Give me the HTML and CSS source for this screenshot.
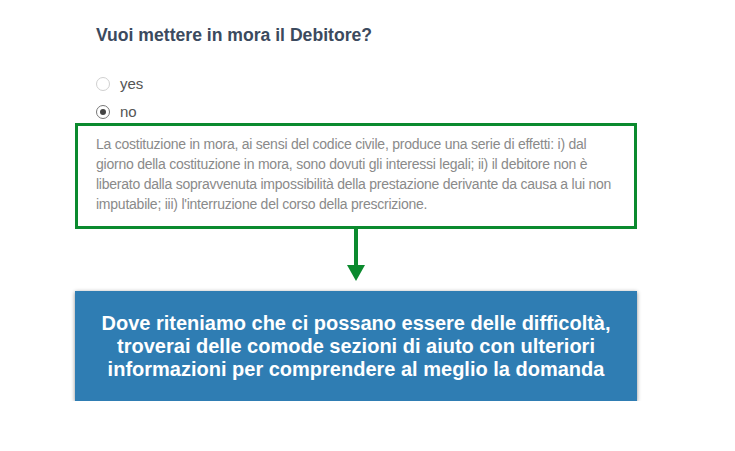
FILE: index.html
```html
<!DOCTYPE html>
<html>
<head>
<meta charset="utf-8">
<link rel="stylesheet" href="styles.css">
</head>
<body>
<div class="page">
  <h2 class="question">Vuoi mettere in mora il Debitore?</h2>
  <div class="options">
    <label class="option"><span class="radio"></span><span>yes</span></label>
    <label class="option"><span class="radio checked"></span><span>no</span></label>
  </div>
  <div class="help">La costituzione in mora, ai sensi del codice civile, produce una serie di effetti: i) dal giorno della costituzione in mora, sono dovuti gli interessi legali; ii) il debitore non è liberato dalla sopravvenuta impossibilità della prestazione derivante da causa a lui non imputabile; iii) l'interruzione del corso della prescrizione.</div>
  <div class="arrow">
    <svg width="20" height="52" viewBox="0 0 20 52"><rect x="8" y="0" width="4" height="38" fill="#0b8a2e"/><polygon points="1,36 19,36 10,52" fill="#0b8a2e"/></svg>
  </div>
  <div class="callout">Dove riteniamo che ci possano essere delle difficoltà, troverai delle comode sezioni di aiuto con ulteriori informazioni per comprendere al meglio la domanda</div>
</div>
</body>
</html>
```
FILE: styles.css
```css
html, body {
  margin: 0;
  background: #fff;
  font-family: "Liberation Sans", Arial, sans-serif;
}
.page {
  width: 562px;
  margin-left: 75px;
  padding-top: 25px;
  display: flex;
  flex-direction: column;
}
.question {
  margin: 0 0 0 21px;
  font-size: 17.6px;
  line-height: 20px;
  font-weight: bold;
  color: #3b4a5e;
}
.options {
  margin: 29px 0 0 21px;
  display: flex;
  flex-direction: column;
  gap: 8px;
}
.option {
  display: flex;
  align-items: center;
  gap: 10px;
  font-size: 15px;
  line-height: 20px;
  color: #555;
}
.radio {
  width: 12px;
  height: 12px;
  border: 1px solid #d0d0d0;
  border-radius: 50%;
  box-sizing: content-box;
  position: relative;
}
.radio.checked {
  border-color: #777;
}
.radio.checked::after {
  content: "";
  position: absolute;
  left: 3px;
  top: 3px;
  width: 6px;
  height: 6px;
  border-radius: 50%;
  background: #444;
}
.help {
  margin-top: 1px;
  border: 3px solid #0b8a2e;
  padding: 8px 8px 12px 18px;
  font-size: 14px;
  letter-spacing: -0.24px;
  line-height: 20px;
  color: #8a8a8a;
}
.arrow {
  display: flex;
  justify-content: center;
  height: 52px;
  margin-bottom: 10px;
}
.arrow svg {
  display: block;
}
.callout {
  background: #2f7db3;
  color: #fff;
  font-weight: bold;
  font-size: 20px;
  line-height: 23px;
  text-align: center;
  padding: 21px 20px 20px;
  box-shadow: 0 1px 4px rgba(0,0,0,0.45);
}
```
